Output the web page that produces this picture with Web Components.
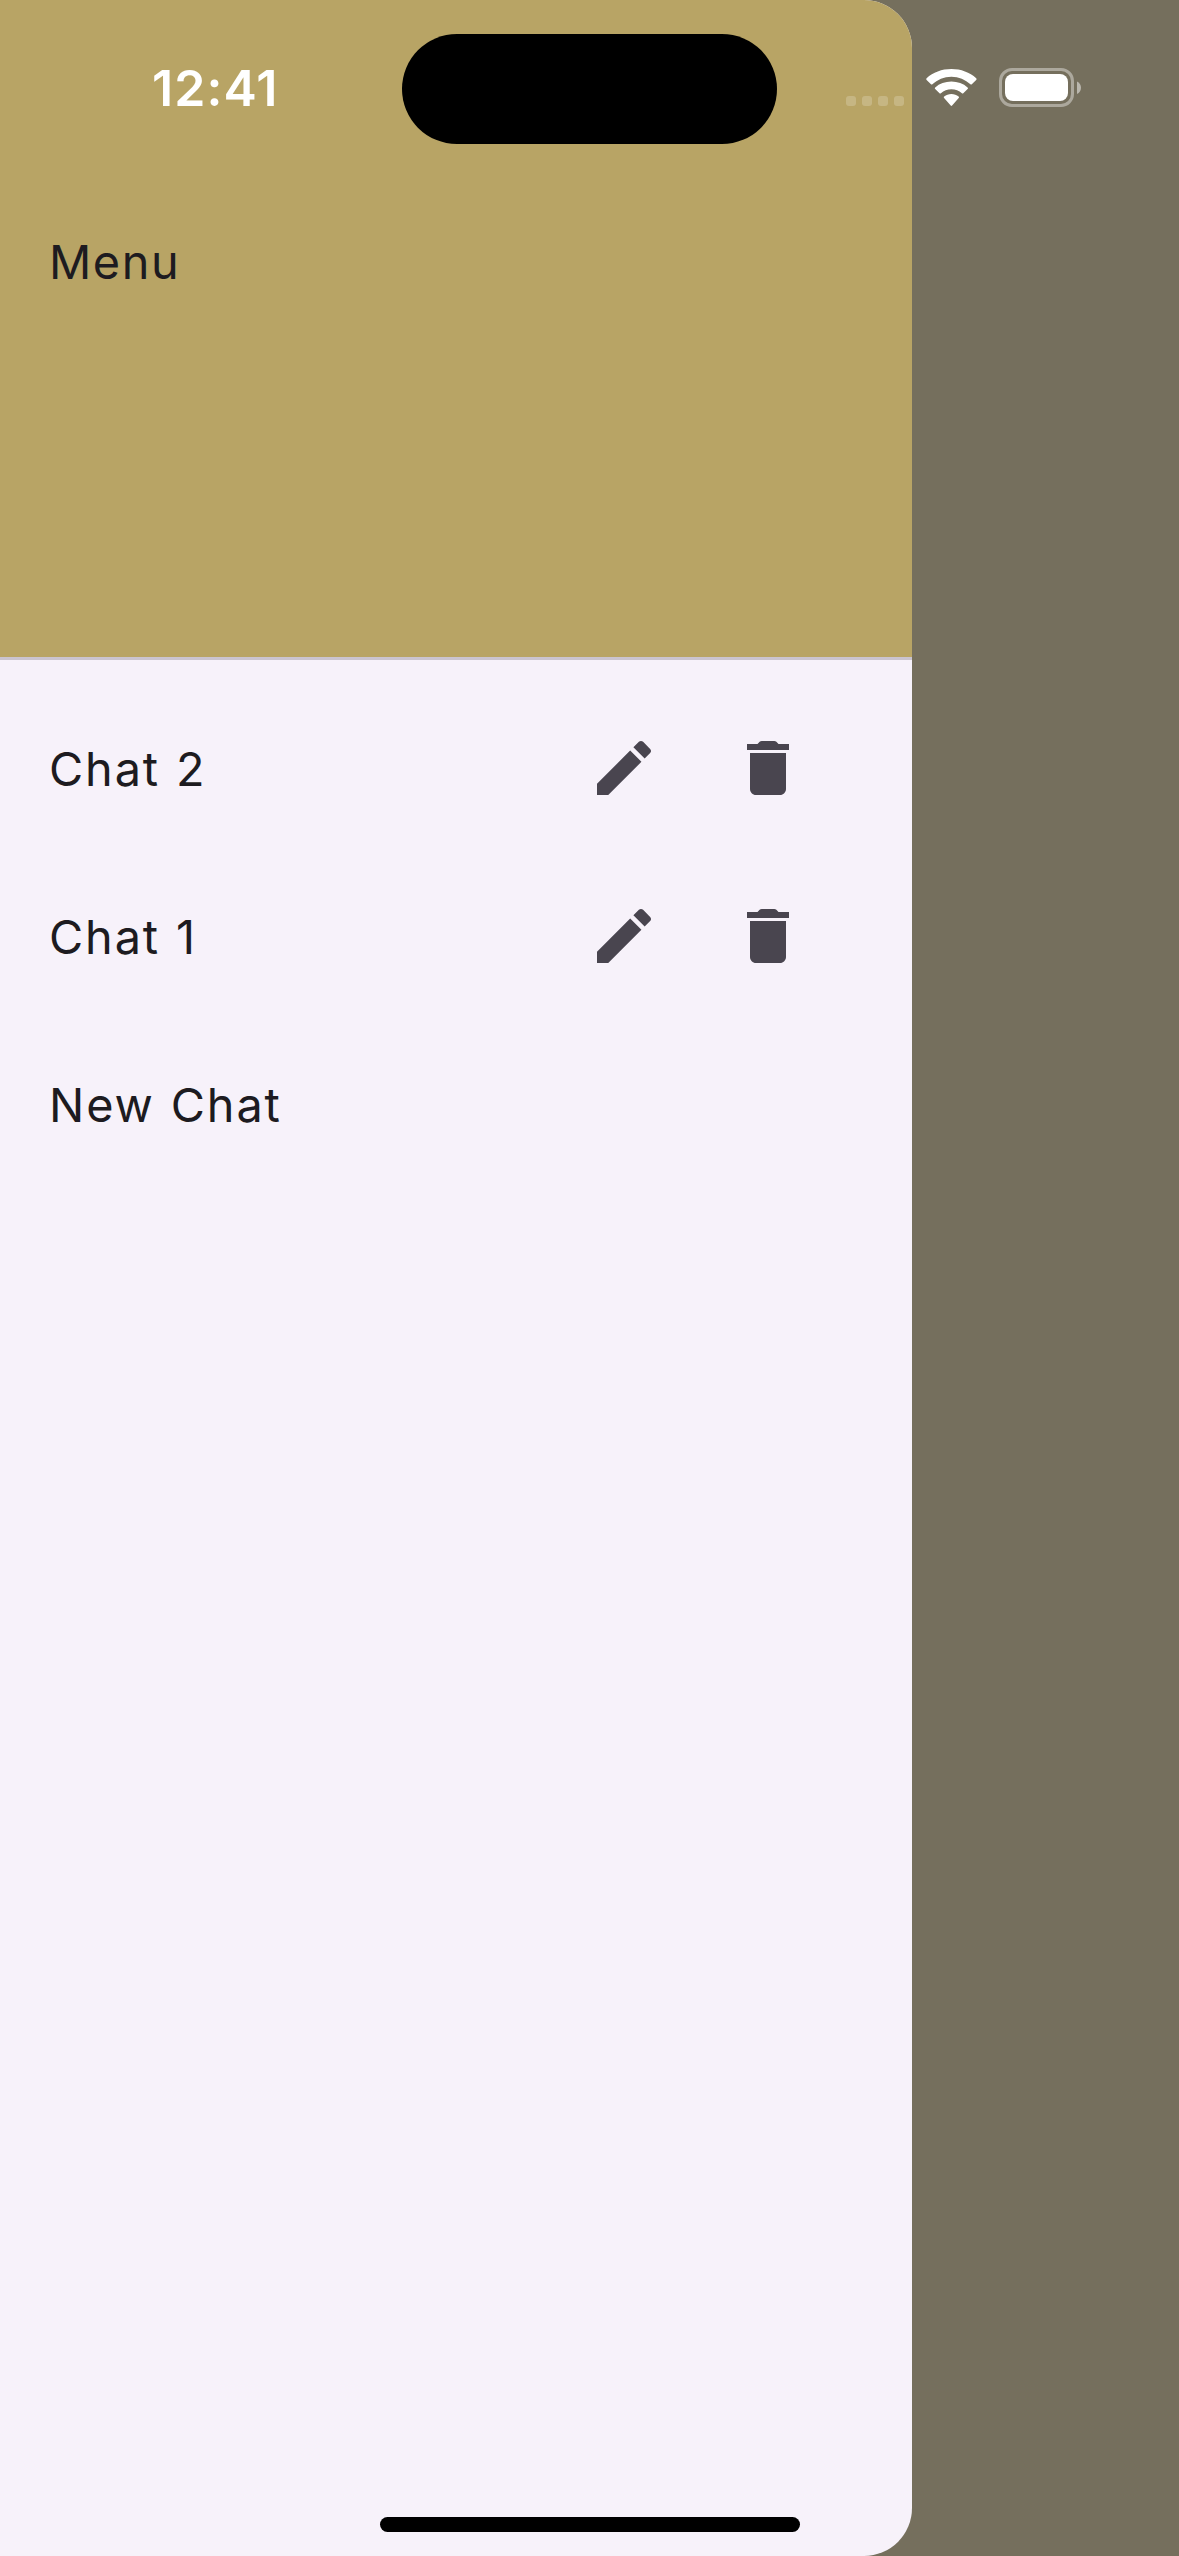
<!DOCTYPE html>
<html lang="en">
<head>
<meta charset="utf-8">
<title>Menu</title>
<style>
html,body{margin:0;height:100%}
body{font-family:Inter,"Liberation Sans",sans-serif;overflow:hidden}
</style>
</head>
<body>
<app-screen>
  <status-bar slot="overlay" time="12:41"></status-bar>
  <nav-drawer>
    <drawer-header>Menu</drawer-header>
    <chat-row editable>Chat 2</chat-row>
    <chat-row editable>Chat 1</chat-row>
    <chat-row>New Chat</chat-row>
  </nav-drawer>
  <home-indicator slot="overlay"></home-indicator>
</app-screen>
<script>
const define = (name, html, setup) => {
  const t = document.createElement('template');
  t.innerHTML = html;
  customElements.define(name, class extends HTMLElement {
    constructor() {
      super();
      this.attachShadow({mode: 'open'}).append(t.content.cloneNode(true));
    }
    connectedCallback() { if (setup) setup(this); }
  });
};

define('app-screen', `
<style>
:host{display:flex;position:relative;width:1179px;height:2556px;background:#756f5d}
</style>
<slot></slot><slot name="overlay"></slot>`);

define('nav-drawer', `
<style>
:host{display:flex;flex-direction:column;width:912px;height:100%;background:#f7f2fa;border-radius:0 48px 48px 0;overflow:hidden;color:#1d1b20;font-size:46.8px;font-weight:370;letter-spacing:1.9px;word-spacing:1px;line-height:72px}
</style>
<slot></slot>`);

define('drawer-header', `
<style>
:host{display:block;box-sizing:border-box;height:660px;margin-bottom:24px;padding:226px 48px 48px 49px;background:#b8a465;border-bottom:3px solid #cac4d0;letter-spacing:1.6px}
</style>
<slot></slot>`);

define('svg-icon', `
<style>
:host{display:flex;align-items:center;justify-content:center;width:144px;height:144px}
svg{width:72px;height:72px;fill:#49454f}
</style>
<svg viewBox="0 0 24 24"><path/></svg>`, el => {
  const paths = {
    edit: 'M3 17.25V21h3.75L17.81 9.94l-3.75-3.75L3 17.25zM20.71 7.04c.39-.39.39-1.02 0-1.41l-2.34-2.34c-.39-.39-1.02-.39-1.41 0l-1.83 1.83 3.75 3.75 1.83-1.83z',
    delete: 'M6 19c0 1.1.9 2 2 2h8c1.1 0 2-.9 2-2V7H6v12zM19 4h-3.5l-.71-.71c-.18-.18-.44-.29-.7-.29H9.91c-.26 0-.52.11-.7.29L8.5 4H5v2h14V4z'
  };
  el.shadowRoot.querySelector('path').setAttribute('d', paths[el.getAttribute('name')]);
});

define('chat-row', `
<style>
:host{display:flex;flex:none;align-items:center;box-sizing:border-box;height:168px;padding:0 72px 0 49px}
.label{flex:1;padding-top:1px}
.actions{display:none}
:host([editable]) .actions{display:flex}
</style>
<div class="label"><slot></slot></div>
<div class="actions"><svg-icon name="edit"></svg-icon><svg-icon name="delete"></svg-icon></div>`);

define('status-bar', `
<style>
:host{position:absolute;inset:0 0 auto 0;height:177px;display:flex;color:#fff}
.time{width:401.6px;box-sizing:border-box;padding:58px 0 0 152px;font-size:50px;line-height:60px;font-weight:600;letter-spacing:1.1px}
.island{width:375.6px;height:110.7px;margin-top:33.6px;border-radius:56px;background:#000}
.right{width:401px;margin-left:auto}
svg{display:block}
</style>
<div class="time"></div>
<div class="island"></div>
<div class="right"><svg width="401" height="177" viewBox="778 0 401 177">
<g fill="#fff" fill-opacity=".2"><rect x="846" y="96" width="10" height="10" rx="3"/><rect x="862" y="96" width="10" height="10" rx="3"/><rect x="878" y="96" width="10" height="10" rx="3"/><rect x="894" y="96" width="10" height="10" rx="3"/></g>
<g fill="#fff">
<path d="M951.4 76.7c7.4 0 14 2.9 19 7.6.4.4 1 .4 1.400 0l4.400-4.400c.5-.5.5-1.200 0-1.700-6.500-5.900-15.200-9.200-24.800-9.200s-18.300 3.300-24.800 9.200c-.5.5-.5 1.200 0 1.700l4.400 4.400c.4.4 1 .4 1.400 0 5-4.700 11.600-7.600 19-7.600z"/>
<path d="M951.4 89.200c4 0 7.700 1.500 10.500 4 .4.4 1 .4 1.400 0l4.300-4.100c.5-.5.5-1.200 0-1.700-4.300-3.800-10-5.900-16.200-5.900s-11.900 2.100-16.200 5.900c-.5.5-.5 1.200 0 1.700l4.300 4.100c.4.4 1 .4 1.400 0 2.800-2.500 6.500-4 10.500-4z"/>
<path d="M958.700 98c.5-.5.4-1.100-.1-1.500-1.900-1.500-4.500-2.500-7.200-2.500s-5.300 1-7.200 2.500c-.5.4-.6 1-.1 1.500l6.600 7.600c.4.500 1 .5 1.400 0z"/>
</g>
<rect x="1000.500" y="69.500" width="72" height="36" rx="11.500" fill="none" stroke="#fff" stroke-opacity=".4" stroke-width="3"/>
<rect x="1005" y="74" width="63" height="27" rx="8" fill="#fff"/>
<path d="M1077 81.500c2.400 1 4 3.400 4 6.200s-1.600 5.200-4 6.200z" fill="#fff" fill-opacity=".5"/>
</svg></div>`, el => { el.shadowRoot.querySelector('.time').textContent = el.getAttribute('time'); });

define('home-indicator', `
<style>
:host{position:absolute;left:0;right:0;bottom:24px;display:flex;box-sizing:border-box;padding-left:380px}
div{width:420px;height:15px;border-radius:8px;background:#000}
</style>
<div></div>`);
</script>
</body>
</html>
